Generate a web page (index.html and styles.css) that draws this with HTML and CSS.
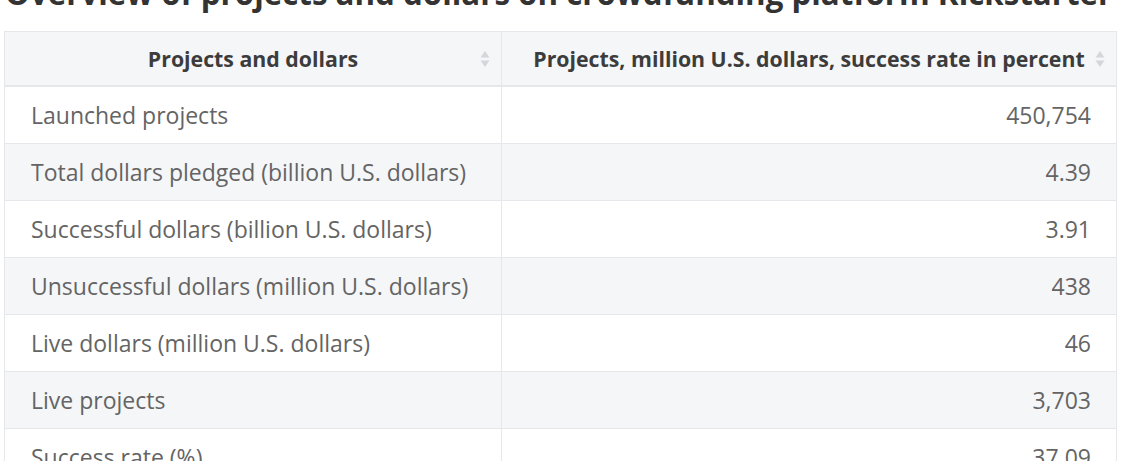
FILE: index.html
```html
<!DOCTYPE html>
<html>
<head>
<meta charset="utf-8">
<link rel="stylesheet" href="styles.css">
</head>
<body>
<div class="page">
  <h1 class="title">Overview of projects and dollars on crowdfunding platform Kickstarter</h1>
  <table class="data">
    <colgroup>
      <col class="c1">
      <col class="c2">
    </colgroup>
    <thead>
      <tr>
        <th><span class="th-text">Projects and dollars</span><span class="sort"><svg width="10" height="18" viewBox="0 0 10 18"><path d="M5 1 L9.5 7.5 H0.5 Z" fill="#d3d6db"/><path d="M5 17 L9.5 10.5 H0.5 Z" fill="#d3d6db"/></svg></span></th>
        <th><span class="th-text">Projects, million U.S. dollars, success rate in percent</span><span class="sort"><svg width="10" height="18" viewBox="0 0 10 18"><path d="M5 1 L9.5 7.5 H0.5 Z" fill="#d3d6db"/><path d="M5 17 L9.5 10.5 H0.5 Z" fill="#d3d6db"/></svg></span></th>
      </tr>
    </thead>
    <tbody>
      <tr><td>Launched projects</td><td class="num">450,754</td></tr>
      <tr><td>Total dollars pledged (billion U.S. dollars)</td><td class="num">4.39</td></tr>
      <tr><td>Successful dollars (billion U.S. dollars)</td><td class="num">3.91</td></tr>
      <tr><td>Unsuccessful dollars (million U.S. dollars)</td><td class="num">438</td></tr>
      <tr><td>Live dollars (million U.S. dollars)</td><td class="num">46</td></tr>
      <tr><td>Live projects</td><td class="num">3,703</td></tr>
      <tr><td>Success rate (%)</td><td class="num">37.09</td></tr>
    </tbody>
  </table>
</div>
</body>
</html>
```
FILE: styles.css
```css
html, body {
  margin: 0;
  padding: 0;
  background: #ffffff;
  overflow: hidden;
}
.page {
  padding: 0 5px 0 4px;
  font-family: "Open Sans", "Liberation Sans", sans-serif;
}
.title {
  margin: -22px 0 22px 1px;
  font-size: 31.3px;
  line-height: 31px;
  font-weight: 700;
  color: #333333;
  white-space: nowrap;
}
.data {
  width: 1113px;
  border-collapse: collapse;
  table-layout: fixed;
  border: 1px solid #e6e7ea;
}
.data .c1 {
  width: 497px;
}
.data th {
  position: relative;
  height: 53px;
  padding: 0 24px;
  background: #f5f6f8;
  font-size: 21.3px;
  font-weight: 700;
  color: #3c3c3c;
  text-align: center;
  border-bottom: 2px solid #e6e7ea;
  border-left: 1px solid #e6e7ea;
  white-space: nowrap;
}
.data .sort {
  position: absolute;
  right: 11px;
  top: 18px;
  line-height: 0;
}
.data td {
  height: 56px;
  padding: 0 25px 0 26px;
  font-size: 23px;
  color: #646464;
  border-top: 1px solid #e6e7ea;
  border-left: 1px solid #e6e7ea;
  white-space: nowrap;
}
.data tbody tr:nth-child(even) td {
  background: #f5f6f8;
}
.data td.num {
  text-align: right;
}
```
